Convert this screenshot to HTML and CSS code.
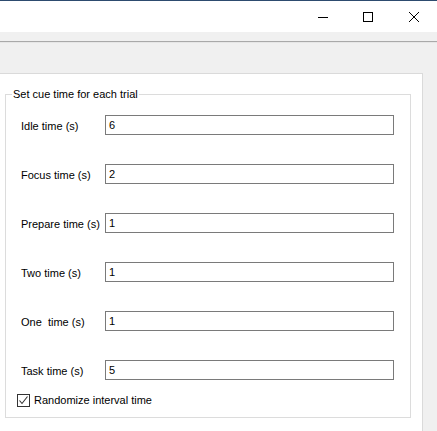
FILE: index.html
```html
<!DOCTYPE html>
<html>
<head>
<meta charset="utf-8">
<link rel="stylesheet" href="styles.css">
</head>
<body>
<div class="window">
  <div class="titlebar">
    <div class="tb-btn">
      <svg width="10" height="10" viewBox="0 0 10 10"><path d="M0 5.5H10" stroke="#000" stroke-width="1"/></svg>
    </div>
    <div class="tb-btn">
      <svg width="10" height="10" viewBox="0 0 10 10"><rect x="0.5" y="0.5" width="9" height="9" fill="none" stroke="#000" stroke-width="1"/></svg>
    </div>
    <div class="tb-btn">
      <svg width="10" height="10" viewBox="0 0 10 10"><path d="M0 0L10 10M10 0L0 10" stroke="#000" stroke-width="1"/></svg>
    </div>
  </div>
  <div class="menuband"></div>
  <div class="content">
    <div class="panel">
      <fieldset class="group">
        <legend class="group-title">Set cue time for each trial</legend>
        <div class="rows">
          <div class="row"><span class="label">Idle time (s)</span><div class="field">6</div></div>
          <div class="row"><span class="label">Focus time (s)</span><div class="field">2</div></div>
          <div class="row"><span class="label">Prepare time (s)</span><div class="field">1</div></div>
          <div class="row"><span class="label">Two time (s)</span><div class="field">1</div></div>
          <div class="row"><span class="label">One&nbsp; time (s)</span><div class="field">1</div></div>
          <div class="row"><span class="label">Task time (s)</span><div class="field">5</div></div>
        </div>
        <div class="check-row">
          <span class="checkbox">
            <svg width="11" height="11" viewBox="0 0 11 11"><path d="M1.5 5.5L4 8.5L9.5 1.5" fill="none" stroke="#333" stroke-width="1.1"/></svg>
          </span>
          <span class="check-label">Randomize interval time</span>
        </div>
      </fieldset>
    </div>
  </div>
</div>
</body>
</html>
```

FILE: styles.css
```css
html, body {
  margin: 0;
  padding: 0;
}
body {
  width: 437px;
  height: 431px;
  overflow: hidden;
  background: #f0f0f0;
  font-family: "Liberation Sans", Arial, sans-serif;
  font-size: 11px;
  color: #000;
}
.window {
  display: flex;
  flex-direction: column;
  height: 431px;
}
.titlebar {
  height: 31px;
  border-top: 1px solid #2d4b6f;
  background: #fff;
  display: flex;
  justify-content: flex-end;
}
.tb-btn {
  width: 46px;
  height: 31px;
  display: flex;
  align-items: center;
  justify-content: center;
}
.tb-btn:first-child svg {
  margin-left: 1px;
}
.menuband {
  height: 10px;
  background: #f0f0f0;
  border-bottom: 1px solid #a9a9a9;
  box-shadow: 0 1px 0 #e6e6e6;
}
.content {
  flex: 1;
  padding-top: 31px;
  display: flex;
}
.panel {
  width: 423px;
  background: #fff;
  border-top: 1px solid #dadada;
  border-right: 1px solid #dadada;
  padding-top: 14px;
  box-sizing: border-box;
  height: 358px;
}
.group {
  margin: 0 0 0 5px;
  width: 406px;
  box-sizing: border-box;
  border: 1px solid #dcdcdc;
  padding: 0 0 10px 15px;
}
.group-title {
  margin-left: -9px;
  padding: 0 1px;
  line-height: 13px;
  height: 13px;
}
.rows {
  padding-top: 14px;
  display: flex;
  flex-direction: column;
  gap: 29px;
}
.row {
  display: flex;
  align-items: center;
  height: 20px;
}
.label {
  width: 84px;
  line-height: 13px;
  padding-top: 2px;
}
.field {
  width: 289px;
  height: 20px;
  box-sizing: border-box;
  border: 1px solid #7a7a7a;
  padding: 3px 0 0 3px;
  line-height: 13px;
}
.check-row {
  display: flex;
  align-items: center;
  margin-top: 14px;
  margin-left: -4px;
  height: 13px;
}
.checkbox {
  width: 13px;
  height: 13px;
  box-sizing: border-box;
  border: 1px solid #333;
  display: flex;
  align-items: center;
  justify-content: center;
}
.check-label {
  margin-left: 4px;
  line-height: 13px;
}
```
